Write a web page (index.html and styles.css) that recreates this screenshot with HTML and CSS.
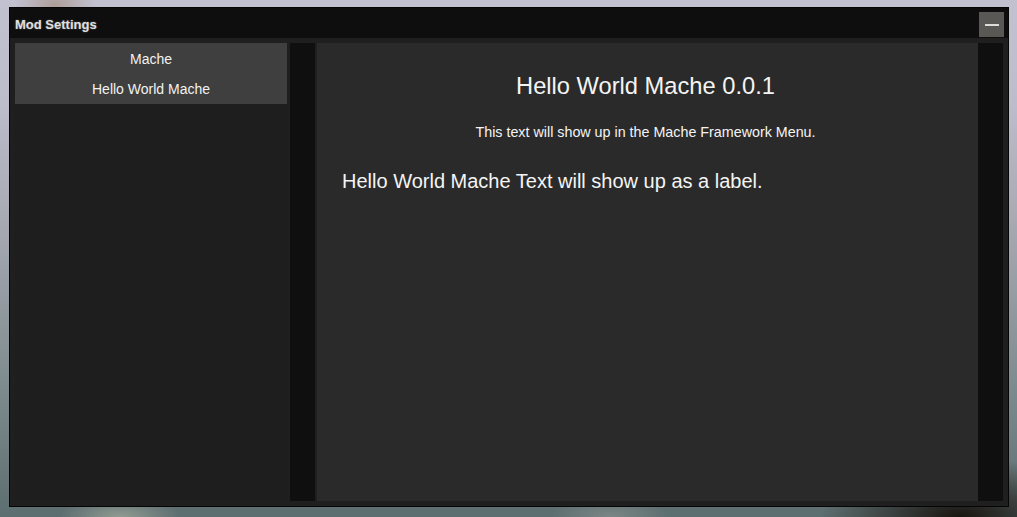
FILE: index.html
```html
<!DOCTYPE html>
<html>
<head>
<meta charset="utf-8">
<title>Mod Settings</title>
<link rel="stylesheet" href="styles.css">
</head>
<body>
<div class="backdrop">
  <div class="window">
    <div class="titlebar">
      <span class="title">Mod Settings</span>
      <button class="min-btn" aria-label="Minimize"><span class="min-bar"></span></button>
    </div>
    <div class="body">
      <div class="sidebar">
        <div class="mod-list">
          <div class="mod-item">Mache</div>
          <div class="mod-item">Hello World Mache</div>
        </div>
      </div>
      <div class="scroll-col"></div>
      <div class="content">
        <h1 class="mod-title">Hello World Mache 0.0.1</h1>
        <p class="mod-desc">This text will show up in the Mache Framework Menu.</p>
        <p class="mod-label">Hello World Mache Text will show up as a label.</p>
      </div>
      <div class="scroll-col"></div>
    </div>
  </div>
</div>
</body>
</html>
```

FILE: styles.css
```css
* { box-sizing: border-box; }
html, body { margin: 0; padding: 0; }
body {
  width: 1017px;
  height: 517px;
  overflow: hidden;
  font-family: "Liberation Sans", Arial, sans-serif;
}
.backdrop {
  width: 1017px;
  height: 517px;
  padding: 7px 8px 10px 9px;
  background:
    radial-gradient(ellipse 40px 30px at 55px 5px, rgba(170,150,140,0.8), rgba(170,150,140,0) 100%),
    radial-gradient(ellipse 60px 20px at 120px 517px, rgba(150,160,150,0.9), rgba(150,160,150,0) 100%),
    radial-gradient(ellipse 60px 20px at 610px 517px, rgba(130,140,138,0.8), rgba(130,140,138,0) 100%),
    radial-gradient(ellipse 140px 60px at 960px 517px, rgba(25,20,15,1), rgba(25,20,15,0) 100%),
    linear-gradient(180deg, #c2c1d0 0%, #bdbccb 20%, #a5a7b0 45%, #7d8b8e 75%, #5d6e70 100%);
}
.window {
  width: 1000px;
  height: 500px;
  border: 1px solid #050505;
  background: #1f1f1f;
  display: flex;
  flex-direction: column;
}
.titlebar {
  height: 30px;
  background: #0e0e0e;
  display: flex;
  align-items: flex-start;
  justify-content: space-between;
  padding: 0 4px 0 5px;
}
.title {
  color: #e0e0e0;
  font-weight: bold;
  font-size: 13px;
  line-height: 30px;
  padding-top: 2px;
  text-shadow: 0 0 2px rgba(255,255,255,0.35);
}
.min-btn {
  margin-top: 4px;
  width: 25px;
  height: 25px;
  border: none;
  padding: 0;
  background: #5a5855;
  display: flex;
  align-items: center;
  justify-content: center;
}
.min-bar {
  display: block;
  width: 14px;
  height: 2px;
  background: #dcdcdc;
  margin-top: 1px;
}
.body {
  flex: 1;
  display: flex;
  padding: 5px;
}
.sidebar {
  width: 272px;
  background: #1e1e1e;
  margin-right: 3px;
}
.mod-list {
  background: #3f3f3f;
  padding-top: 1px;
}
.mod-item {
  height: 30px;
  line-height: 30px;
  text-align: center;
  color: #f2f2f2;
  font-size: 14px;
}
.scroll-col {
  width: 25px;
  background: #0f0f0f;
}
.content {
  width: 661px;
  margin-left: 2px;
  background: #2a2a2a;
  color: #f4f4f4;
  padding: 28px 29px 0 25px;
}
.mod-title {
  margin: 0;
  font-weight: normal;
  font-size: 23.7px;
  line-height: 30px;
  text-align: center;
}
.mod-desc {
  margin: 22px 0 0 0;
  font-size: 14.3px;
  line-height: 18px;
  text-align: center;
}
.mod-label {
  margin: 28px 0 0 0;
  font-size: 20px;
  line-height: 24px;
}
```
